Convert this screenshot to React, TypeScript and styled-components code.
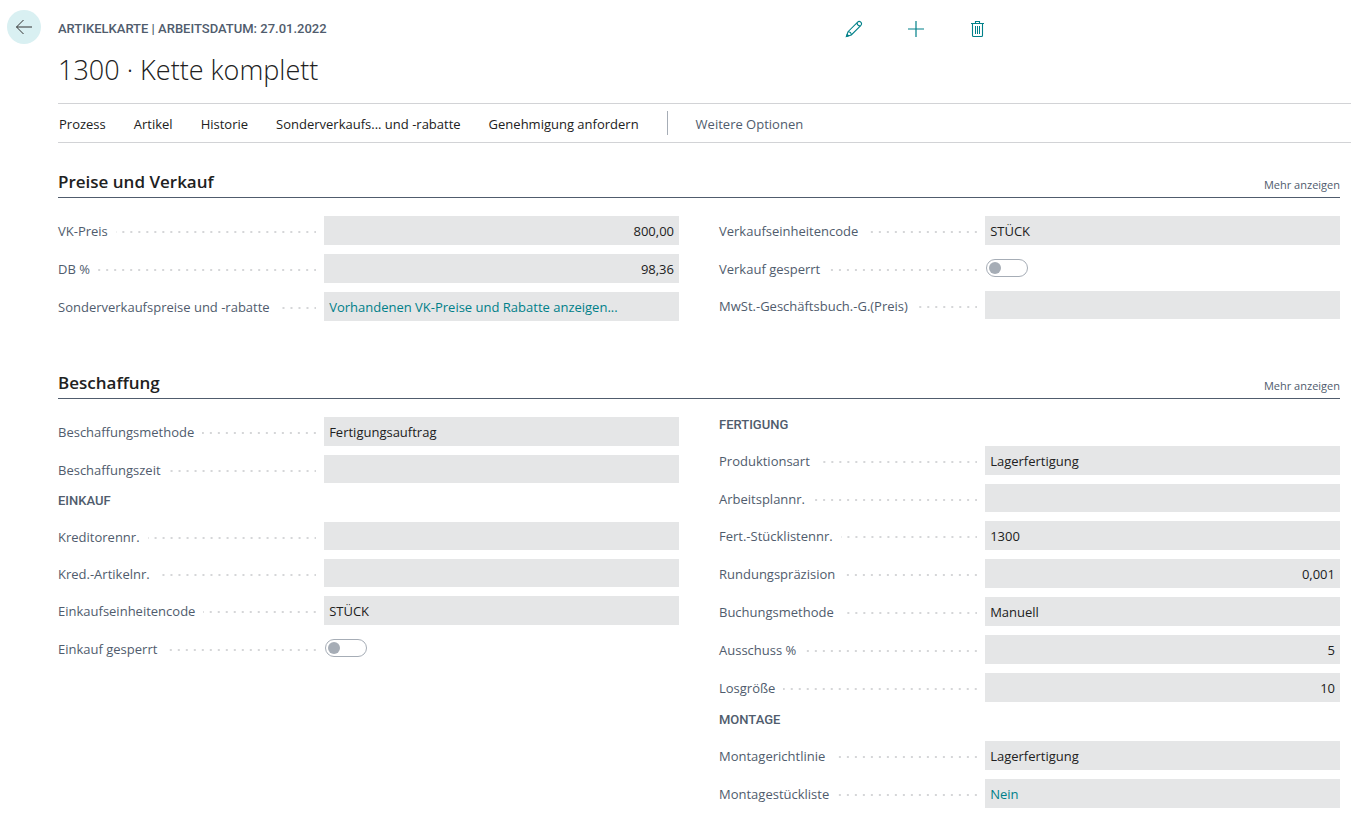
import React, { useId } from "react";
import styled, { createGlobalStyle, css } from "styled-components";

const color = {
  text: "#212121",
  label: "#505c6d",
  teal: "#008089",
  field: "#e5e6e7",
  line: "#d2d3d6",
  dot: "#d5d6d8",
  toggle: "#a6adb6",
};

const GlobalStyle = createGlobalStyle`
  *, *::before, *::after { box-sizing: border-box; }
  body {
    margin: 0;
    background: #fff;
    color: ${color.text};
    font-family: "Segoe UI", "Open Sans", "Noto Sans", sans-serif;
    font-size: 13px;
    line-height: 20px;
  }
  button, input { font: inherit; }
`;

const captionFont = css`
  font-family: Bahnschrift, Roboto, sans-serif;
  font-weight: 500;
  color: ${color.label};
`;

const Page = styled.div`
  display: flex;
  align-items: flex-start;
  gap: 17px;
  padding: 10px 0 11px 7px;
`;

const BackButton = styled.button`
  display: grid;
  place-items: center;
  flex: none;
  width: 34px;
  height: 34px;
  padding: 0;
  border: 0;
  border-radius: 50%;
  background: #d9f0f2;
  color: #333;
  cursor: pointer;
`;

const Card = styled.div`
  flex: 1;
  min-width: 0;
`;

const TopRow = styled.div`
  display: grid;
  grid-template-columns: 61fr 39fr;
  align-items: center;
  height: 38px;
`;

const Caption = styled.div`
  ${captionFont}
  font-size: 13px;
`;

const Actions = styled.div`
  display: flex;
  gap: 44px;
  margin-left: -2px;
`;

const IconButton = styled.button`
  display: grid;
  place-items: center;
  width: 18px;
  height: 18px;
  padding: 0;
  border: 0;
  background: none;
  color: ${color.teal};
  cursor: pointer;
`;

const Title = styled.h1`
  margin: 0 0 11px;
  font-size: 27px;
  font-weight: 300;
  line-height: 44px;
`;

const CommandBar = styled.nav`
  display: flex;
  align-items: center;
  gap: 28px;
  height: 40px;
  padding-left: 1px;
  border-top: 1px solid ${color.line};
  border-bottom: 1px solid ${color.line};
`;

const Command = styled.button<{ $muted?: boolean }>`
  padding: 2px 0 0;
  border: 0;
  background: none;
  color: ${(p) => (p.$muted ? color.label : color.text)};
  white-space: nowrap;
  cursor: pointer;
`;

const Divider = styled.span`
  width: 1px;
  height: 24px;
  background: ${color.toggle};
`;

const Sections = styled.main`
  display: flex;
  flex-direction: column;
  gap: 37px;
  padding: 23px 11px 0 0;
`;

const SectionHeader = styled.header`
  display: flex;
  align-items: flex-end;
  justify-content: space-between;
  height: 32px;
  padding-bottom: 2px;
  border-bottom: 1px solid ${color.label};
`;

const SectionTitle = styled.h2`
  margin: 0;
  font-size: 17px;
  font-weight: 600;
  line-height: 26px;
`;

const MoreButton = styled.button`
  padding: 0;
  border: 0;
  background: none;
  color: ${color.label};
  font-size: 11px;
  line-height: 20px;
  cursor: pointer;
`;

const Columns = styled.div`
  display: grid;
  grid-template-columns: 1fr 1fr;
  gap: 40px;
  padding-top: 18px;
`;

const GroupTitle = styled.h3`
  ${captionFont}
  margin: 0 0 13px;
  padding-top: 1px;
  font-size: 13px;
  line-height: 16px;

  &:first-child {
    padding-top: 0;
  }
`;

const Row = styled.div<{ $low: boolean }>`
  display: grid;
  grid-template-columns: 3fr 4fr;
  align-items: center;
  height: ${(p) => (p.$low ? 28 : 29)}px;
  margin-bottom: 9px;
`;

const LabelCell = styled.div`
  display: flex;
  align-items: center;
  align-self: start;
  gap: 8px;
  height: 20px;
  margin-top: 5px;
  padding-right: 8px;
`;

const Label = styled.label`
  color: ${color.label};
  white-space: nowrap;
`;

const Leader = styled.span`
  flex: 1;
  height: 2px;
  margin-top: 2px;
  background: linear-gradient(to right, transparent 6px, ${color.dot} 6px) right top / 8px 2px repeat-x;
`;

const fieldBox = css`
  width: 100%;
  height: 100%;
  padding: 0 5px;
  border: 0;
  background: ${color.field};
`;

const TextField = styled.input<{ $numeric: boolean }>`
  ${fieldBox}
  color: ${color.text};
  text-align: ${(p) => (p.$numeric ? "right" : "left")};
`;

const LinkField = styled.div`
  ${fieldBox}
  display: flex;
  align-items: center;
`;

const FieldLink = styled.a`
  color: ${color.teal};
  text-decoration: none;
`;

const Toggle = styled.input`
  appearance: none;
  display: flex;
  align-items: center;
  width: 42px;
  height: 18px;
  margin: 0 1px;
  padding: 0 2px;
  border: 1px solid ${color.toggle};
  border-radius: 9px;
  background: #fff;

  &::before {
    content: "";
    width: 12px;
    height: 12px;
    border-radius: 50%;
    background: ${color.toggle};
  }

  &:checked {
    justify-content: flex-end;
  }
`;

type FieldKind = "text" | "number" | "link" | "toggle";

interface FieldProps {
  label: string;
  value?: string;
  kind?: FieldKind;
}

function Field({ label, value = "", kind = "text" }: FieldProps) {
  const id = useId();
  return (
    <Row $low={value === ""}>
      <LabelCell>
        <Label htmlFor={id}>{label}</Label>
        <Leader />
      </LabelCell>
      {kind === "toggle" && <Toggle id={id} type="checkbox" role="switch" />}
      {kind === "link" && (
        <LinkField>
          <FieldLink id={id} href="#">
            {value}
          </FieldLink>
        </LinkField>
      )}
      {(kind === "text" || kind === "number") && (
        <TextField id={id} type="text" readOnly defaultValue={value} $numeric={kind === "number"} />
      )}
    </Row>
  );
}

interface SectionProps {
  title: string;
  children: React.ReactNode;
}

function Section({ title, children }: SectionProps) {
  return (
    <section>
      <SectionHeader>
        <SectionTitle>{title}</SectionTitle>
        <MoreButton type="button">Mehr anzeigen</MoreButton>
      </SectionHeader>
      <Columns>{children}</Columns>
    </section>
  );
}

const BackIcon = () => (
  <svg width="18" height="18" viewBox="0 0 18 18" fill="none" stroke="currentColor" strokeWidth="1" aria-hidden="true">
    <path d="M17 9H1.5M8.5 2L1.5 9L8.5 16" />
  </svg>
);

const PencilIcon = () => (
  <svg width="18" height="18" viewBox="0 0 18 18" fill="none" stroke="currentColor" strokeWidth="1.1" aria-hidden="true">
    <path d="M1.5 16.5L3 11.7L12.4 2.3C13.4 1.3 14.8 1.3 15.8 2.2C16.7 3.2 16.7 4.6 15.7 5.6L6.3 15L1.5 16.5Z" />
    <path d="M3 11.7C4.8 11.7 6.3 13.2 6.3 15M11.9 2.8C12.2 4.6 13.4 5.8 15.2 6.1" />
    <path d="M1.5 16.5L2.2 14.4L3.6 15.8Z" fill="currentColor" />
  </svg>
);

const PlusIcon = () => (
  <svg width="18" height="18" viewBox="0 0 18 18" fill="none" stroke="currentColor" strokeWidth="1.2" aria-hidden="true">
    <path d="M9 1V17M1 9H17" />
  </svg>
);

const TrashIcon = () => (
  <svg width="18" height="18" viewBox="0 0 18 18" fill="none" stroke="currentColor" aria-hidden="true">
    <path d="M2 3.5H15M6.5 3.5V1.5H10.5V3.5M3.5 3.5V15.5C3.5 16.1 3.9 16.5 4.5 16.5H12.5C13.1 16.5 13.5 16.1 13.5 15.5V3.5" strokeWidth="1.1" />
    <path d="M6.5 6V14M8.5 6V14M10.5 6V14" />
  </svg>
);

export default function App() {
  return (
    <>
      <GlobalStyle />
      <Page>
        <BackButton type="button" aria-label="Zurück">
          <BackIcon />
        </BackButton>
        <Card>
          <TopRow>
            <Caption>ARTIKELKARTE | ARBEITSDATUM: 27.01.2022</Caption>
            <Actions>
              <IconButton type="button" aria-label="Bearbeiten">
                <PencilIcon />
              </IconButton>
              <IconButton type="button" aria-label="Neu">
                <PlusIcon />
              </IconButton>
              <IconButton type="button" aria-label="Löschen">
                <TrashIcon />
              </IconButton>
            </Actions>
          </TopRow>
          <Title>1300 · Kette komplett</Title>
          <CommandBar>
            <Command type="button">Prozess</Command>
            <Command type="button">Artikel</Command>
            <Command type="button">Historie</Command>
            <Command type="button">Sonderverkaufs... und -rabatte</Command>
            <Command type="button">Genehmigung anfordern</Command>
            <Divider />
            <Command type="button" $muted>
              Weitere Optionen
            </Command>
          </CommandBar>
          <Sections>
            <Section title="Preise und Verkauf">
              <div>
                <Field label="VK-Preis" value="800,00" kind="number" />
                <Field label="DB %" value="98,36" kind="number" />
                <Field
                  label="Sonderverkaufspreise und -rabatte"
                  value="Vorhandenen VK-Preise und Rabatte anzeigen..."
                  kind="link"
                />
              </div>
              <div>
                <Field label="Verkaufseinheitencode" value="STÜCK" />
                <Field label="Verkauf gesperrt" kind="toggle" />
                <Field label="MwSt.-Geschäftsbuch.-G.(Preis)" />
              </div>
            </Section>
            <Section title="Beschaffung">
              <div>
                <Field label="Beschaffungsmethode" value="Fertigungsauftrag" />
                <Field label="Beschaffungszeit" />
                <GroupTitle>EINKAUF</GroupTitle>
                <Field label="Kreditorennr." />
                <Field label="Kred.-Artikelnr." />
                <Field label="Einkaufseinheitencode" value="STÜCK" />
                <Field label="Einkauf gesperrt" kind="toggle" />
              </div>
              <div>
                <GroupTitle>FERTIGUNG</GroupTitle>
                <Field label="Produktionsart" value="Lagerfertigung" />
                <Field label="Arbeitsplannr." />
                <Field label="Fert.-Stücklistennr." value="1300" />
                <Field label="Rundungspräzision" value="0,001" kind="number" />
                <Field label="Buchungsmethode" value="Manuell" />
                <Field label="Ausschuss %" value="5" kind="number" />
                <Field label="Losgröße" value="10" kind="number" />
                <GroupTitle>MONTAGE</GroupTitle>
                <Field label="Montagerichtlinie" value="Lagerfertigung" />
                <Field label="Montagestückliste" value="Nein" kind="link" />
              </div>
            </Section>
          </Sections>
        </Card>
      </Page>
    </>
  );
}
